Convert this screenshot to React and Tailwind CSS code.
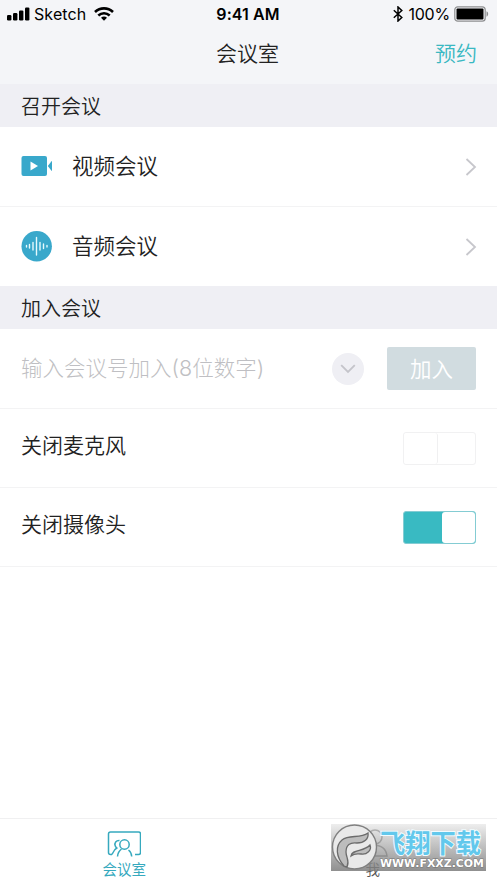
import { useState } from "react";

function SignalIcon() {
    return (
        <svg width="23" height="14" viewBox="0 0 23 14" className="shrink-0">
            <rect x="0" y="8" width="4.4" height="5.5" rx="1.2" />
            <rect x="6" y="6" width="4.4" height="7.5" rx="1.2" />
            <rect x="12" y="3.4" width="4.4" height="10.1" rx="1.2" />
            <rect x="18" y="0.4" width="4.4" height="13.1" rx="1.2" />
        </svg>
    );
}

function WifiIcon() {
    return (
        <svg width="20" height="14" viewBox="0 0 20 14" fill="none" stroke="#000" strokeWidth="2.6">
            <path d="M1 5C6.2 .1 13.8 .1 19 5" />
            <path d="M4.3 8.5c3.3-3 8.1-3 11.4 0" />
            <path d="M7 10.7c1.8-1.5 4.2-1.5 6 0l-3 3z" fill="#000" stroke="none" />
        </svg>
    );
}

function StatusBar() {
    return (
        <div className="grid h-7 grid-cols-3 items-center pl-[7px] pr-[8px] text-[16px] text-black">
            <div className="flex items-center">
                <SignalIcon />
                <span className="ml-[4px] text-[16px] leading-7 tracking-[0.1px]">Sketch</span>
                <span className="ml-[8px]"><WifiIcon /></span>
            </div>
            <span className="text-center text-[16px] font-semibold tracking-[0.1px]">9:41 AM</span>
            <div className="flex items-center justify-end">
                <svg width="10" height="16" viewBox="0 0 10 16" fill="none" stroke="#000" strokeWidth="1.5">
                    <path d="M.8 4.2l8 7.3L5 15V1l3.8 3.5-8 7.3" />
                </svg>
                <span className="ml-[5px] text-[16px] tracking-[-0.2px]">100%</span>
                <svg width="35" height="16" viewBox="0 0 35 16" className="ml-[4px]">
                    <rect x=".8" y=".8" width="30.4" height="14.4" rx="3" fill="none" stroke="#8d8e90" strokeWidth="1.2" />
                    <rect x="2.5" y="2.5" width="27" height="11" rx="1" />
                    <path d="M32.5 5.3c2.2.7 2.2 4.7 0 5.4z" fill="#8d8e90" />
                </svg>
            </div>
        </div>
    );
}

function VideoIcon() {
    return (
        <svg width="31" height="22" viewBox="0 0 31 22" fill="#39a8cb">
            <rect x="0.5" y="0" width="25.5" height="20" rx="2" />
            <path d="M26.8 10l3.7-4.8q.5-.4.5.3v9q0 .7-.5.3z" />
            <path d="M9.5 5.5l7.5 4.5-7.5 4.5z" fill="#fff" />
        </svg>
    );
}

function AudioIcon() {
    return (
        <svg width="31" height="31" viewBox="0 0 31 31">
            <circle cx="15.7" cy="15.2" r="15.2" fill="#39a8cb" />
            <path
                d="M5.5 14.5v1.5M8.5 13.5v3.5M12 11.5v7.5M15.5 6.5v17.500M19 11.500v7.500M22.500 13v4.500M26 14.500v1.500"
                stroke="#e6fafd"
                strokeWidth="1.4"
                strokeLinecap="round"
            />
        </svg>
    );
}

function SectionTitle({ children }) {
    return (
        <h2 className="flex h-[43px] items-center bg-[#efeff4] pl-[21px] pt-[2px] text-[20px] font-[350] text-[#222]">
            {children}
        </h2>
    );
}

function MeetingRow({ icon, label, className = "" }) {
    return (
        <button className={`flex w-full items-center pl-[21px] pr-[20px] text-[21.5px] font-[350] text-[#222] ${className}`}>
            <span className="w-[51px]">{icon}</span>
            <span>{label}</span>
            <svg width="12" height="20" viewBox="0 0 12 20" fill="none" className="ml-auto">
                <path d="M1.5 2l8.5 8-8.5 8" stroke="#c7c7cc" strokeWidth="1.8" />
            </svg>
        </button>
    );
}

function ToggleRow({ label, checked, onChange }) {
    return (
        <div className="flex h-[79px] justify-between border-b border-[#f3f3f4] px-[21px]">
            <span className="pt-[21px] text-[21px] font-[350] leading-8 text-[#222]">{label}</span>
            <button
                role="switch"
                aria-checked={checked}
                aria-label={label}
                onClick={() => onChange(!checked)}
                className={`mt-[23px] flex h-[33px] w-[73px] rounded-[3px] border ${checked
                    ? "justify-end border-[#84ccd3] bg-[#39bac2]"
                    : "justify-start border-[#f1f1f2] bg-white"
                    }`}
            >
                <span
                    className={`h-full rounded-[3px] bg-white ${checked ? "w-[33px]" : "w-[34px] border-r border-[#f0f0f1]"}`}
                />
            </button>
        </div>
    );
}

function Watermark() {
    return (
        <div className="absolute left-[331px] top-[5px] h-[47px] w-[155px] bg-linear-to-b from-[#e2e2e2]/60 to-[#7c7c7c]/85">
            <svg width="155" height="47" viewBox="0 0 155 47" className="overflow-visible">
                <circle cx="23.5" cy="23" r="22" fill="#e9e9e9" stroke="#808080" strokeWidth="1.4" />
                <path
                    d="M13 42C5 33 4 22 11 16C18 10 29 15 37 9C38 15 33 19 26 19C19 18 15 21 15 28C15 34 19 36 16 43Z"
                    fill="#bdbdbd"
                    stroke="#6b6b6b"
                    strokeWidth="1.3"
                />
                <path
                    d="M20 32C21 25 33 28 39 21C41 26 36 31 30 30C26 30 24 29 20 32Z"
                    fill="#bdbdbd"
                    stroke="#6b6b6b"
                    strokeWidth="1.3"
                />
                <text
                    x="49"
                    y="28.5"
                    fontFamily="'Noto Sans CJK SC', sans-serif"
                    fontWeight="700"
                    fontSize="26"
                    textLength="101"
                    lengthAdjust="spacingAndGlyphs"
                    fill="#62c8ec"
                    stroke="#f1fbfe"
                    strokeWidth="2"
                    paintOrder="stroke"
                >
                    飞翔下载
                </text>
                <text
                    x="49"
                    y="43"
                    fontFamily="'DejaVu Sans', sans-serif"
                    fontWeight="700"
                    fontSize="11"
                    textLength="104"
                    lengthAdjust="spacingAndGlyphs"
                    fill="#fff"
                    stroke="#777"
                    strokeWidth="1"
                    paintOrder="stroke"
                >
                    WWW.FXXZ.COM
                </text>
            </svg>
        </div>
    );
}

function TabBar() {
    return (
        <nav className="relative mt-auto grid h-[65px] grid-cols-2 border-t border-[#f0f0f1] bg-white text-[14.5px]">
            <button className="flex flex-col items-center pt-[12px] text-[#36a9be]">
                <svg width="34" height="27" viewBox="0 0 34 27" fill="none" stroke="currentColor" strokeWidth="1.5">
                    <path d="M5 23.5H3.5q-2 0-2-2V3q0-2 2-2h28q2 0 2 2v18.5q0 2-2 2H28" />
                    <circle cx="17.5" cy="13.5" r="4.7" />
                    <path d="M10.5 25.5c.2-3.5 1.5-5.5 4-7.5M21.5 19c2 1.5 3 3.5 3.2 6.5M12.5 9.5c-3.5-.2-5.3 2.5-4.3 5.3.3 1 .9 1.7 1.6 2.2C7 18.5 6.2 21 5 23.5" />
                </svg>
                <span className="leading-[24px]">会议室</span>
            </button>
            <button className="flex flex-col items-center pt-[10px] font-[350] text-[#555]">
                <svg width="30" height="29" viewBox="0 0 30 29" fill="none" stroke="#777" strokeWidth="1.5">
                    <circle cx="17" cy="8" r="7" />
                    <path d="M1 27c1-8 7-11 14-11s13 3 14 11z" />
                </svg>
                <span className="leading-[24px]">我</span>
            </button>
            <Watermark />
        </nav>
    );
}

export default function App() {
    const [meetingId, setMeetingId] = useState("");
    const [micOff, setMicOff] = useState(false);
    const [cameraOff, setCameraOff] = useState(true);

    return (
        <div className="flex h-[883px] w-[497px] flex-col overflow-hidden bg-white font-[Inter,'Noto_Sans_CJK_SC',sans-serif]">
            <header className="h-[84px] bg-[#f4f5f8]">
                <StatusBar />
                <div className="grid h-[51px] grid-cols-3 items-center px-[20px] pt-px text-[21px] font-[350]">
                    <h1 className="col-start-2 -ml-[2px] text-center text-[#222]">会议室</h1>
                    <button className="justify-self-end text-[#39b8c2]">预约</button>
                </div>
            </header>

            <SectionTitle>召开会议</SectionTitle>
            <MeetingRow icon={<VideoIcon />} label="视频会议" className="h-[80px] border-b border-[#f3f3f4]" />
            <MeetingRow icon={<AudioIcon />} label="音频会议" className="h-[79px]" />

            <SectionTitle>加入会议</SectionTitle>
            <div className="flex h-[80px] items-center border-b border-[#f3f3f4] px-[21px]">
                <input
                    value={meetingId}
                    onChange={(e) => setMeetingId(e.target.value)}
                    placeholder="输入会议号加入(8位数字)"
                    className="w-[311px] text-[21.5px] font-light outline-none placeholder:text-[#bfbfc3]"
                />
                <button aria-label="历史会议" className="flex size-8 shrink-0 items-center justify-center rounded-full bg-[#efeff4]">
                    <svg width="16" height="10" viewBox="0 0 16 10" fill="none">
                        <path d="M1.2 1.2L8 8l6.800-6.8" stroke="#c4c4ca" strokeWidth="1.8" />
                    </svg>
                </button>
                <button className="ml-auto h-[43px] w-[89px] rounded-[2px] bg-[#d1dce0] pt-px text-[21.5px] font-[350] text-white">
                    加入
                </button>
            </div>
            <ToggleRow label="关闭麦克风" checked={micOff} onChange={setMicOff} />
            <ToggleRow label="关闭摄像头" checked={cameraOff} onChange={setCameraOff} />

            <TabBar />
        </div>
    );
}
